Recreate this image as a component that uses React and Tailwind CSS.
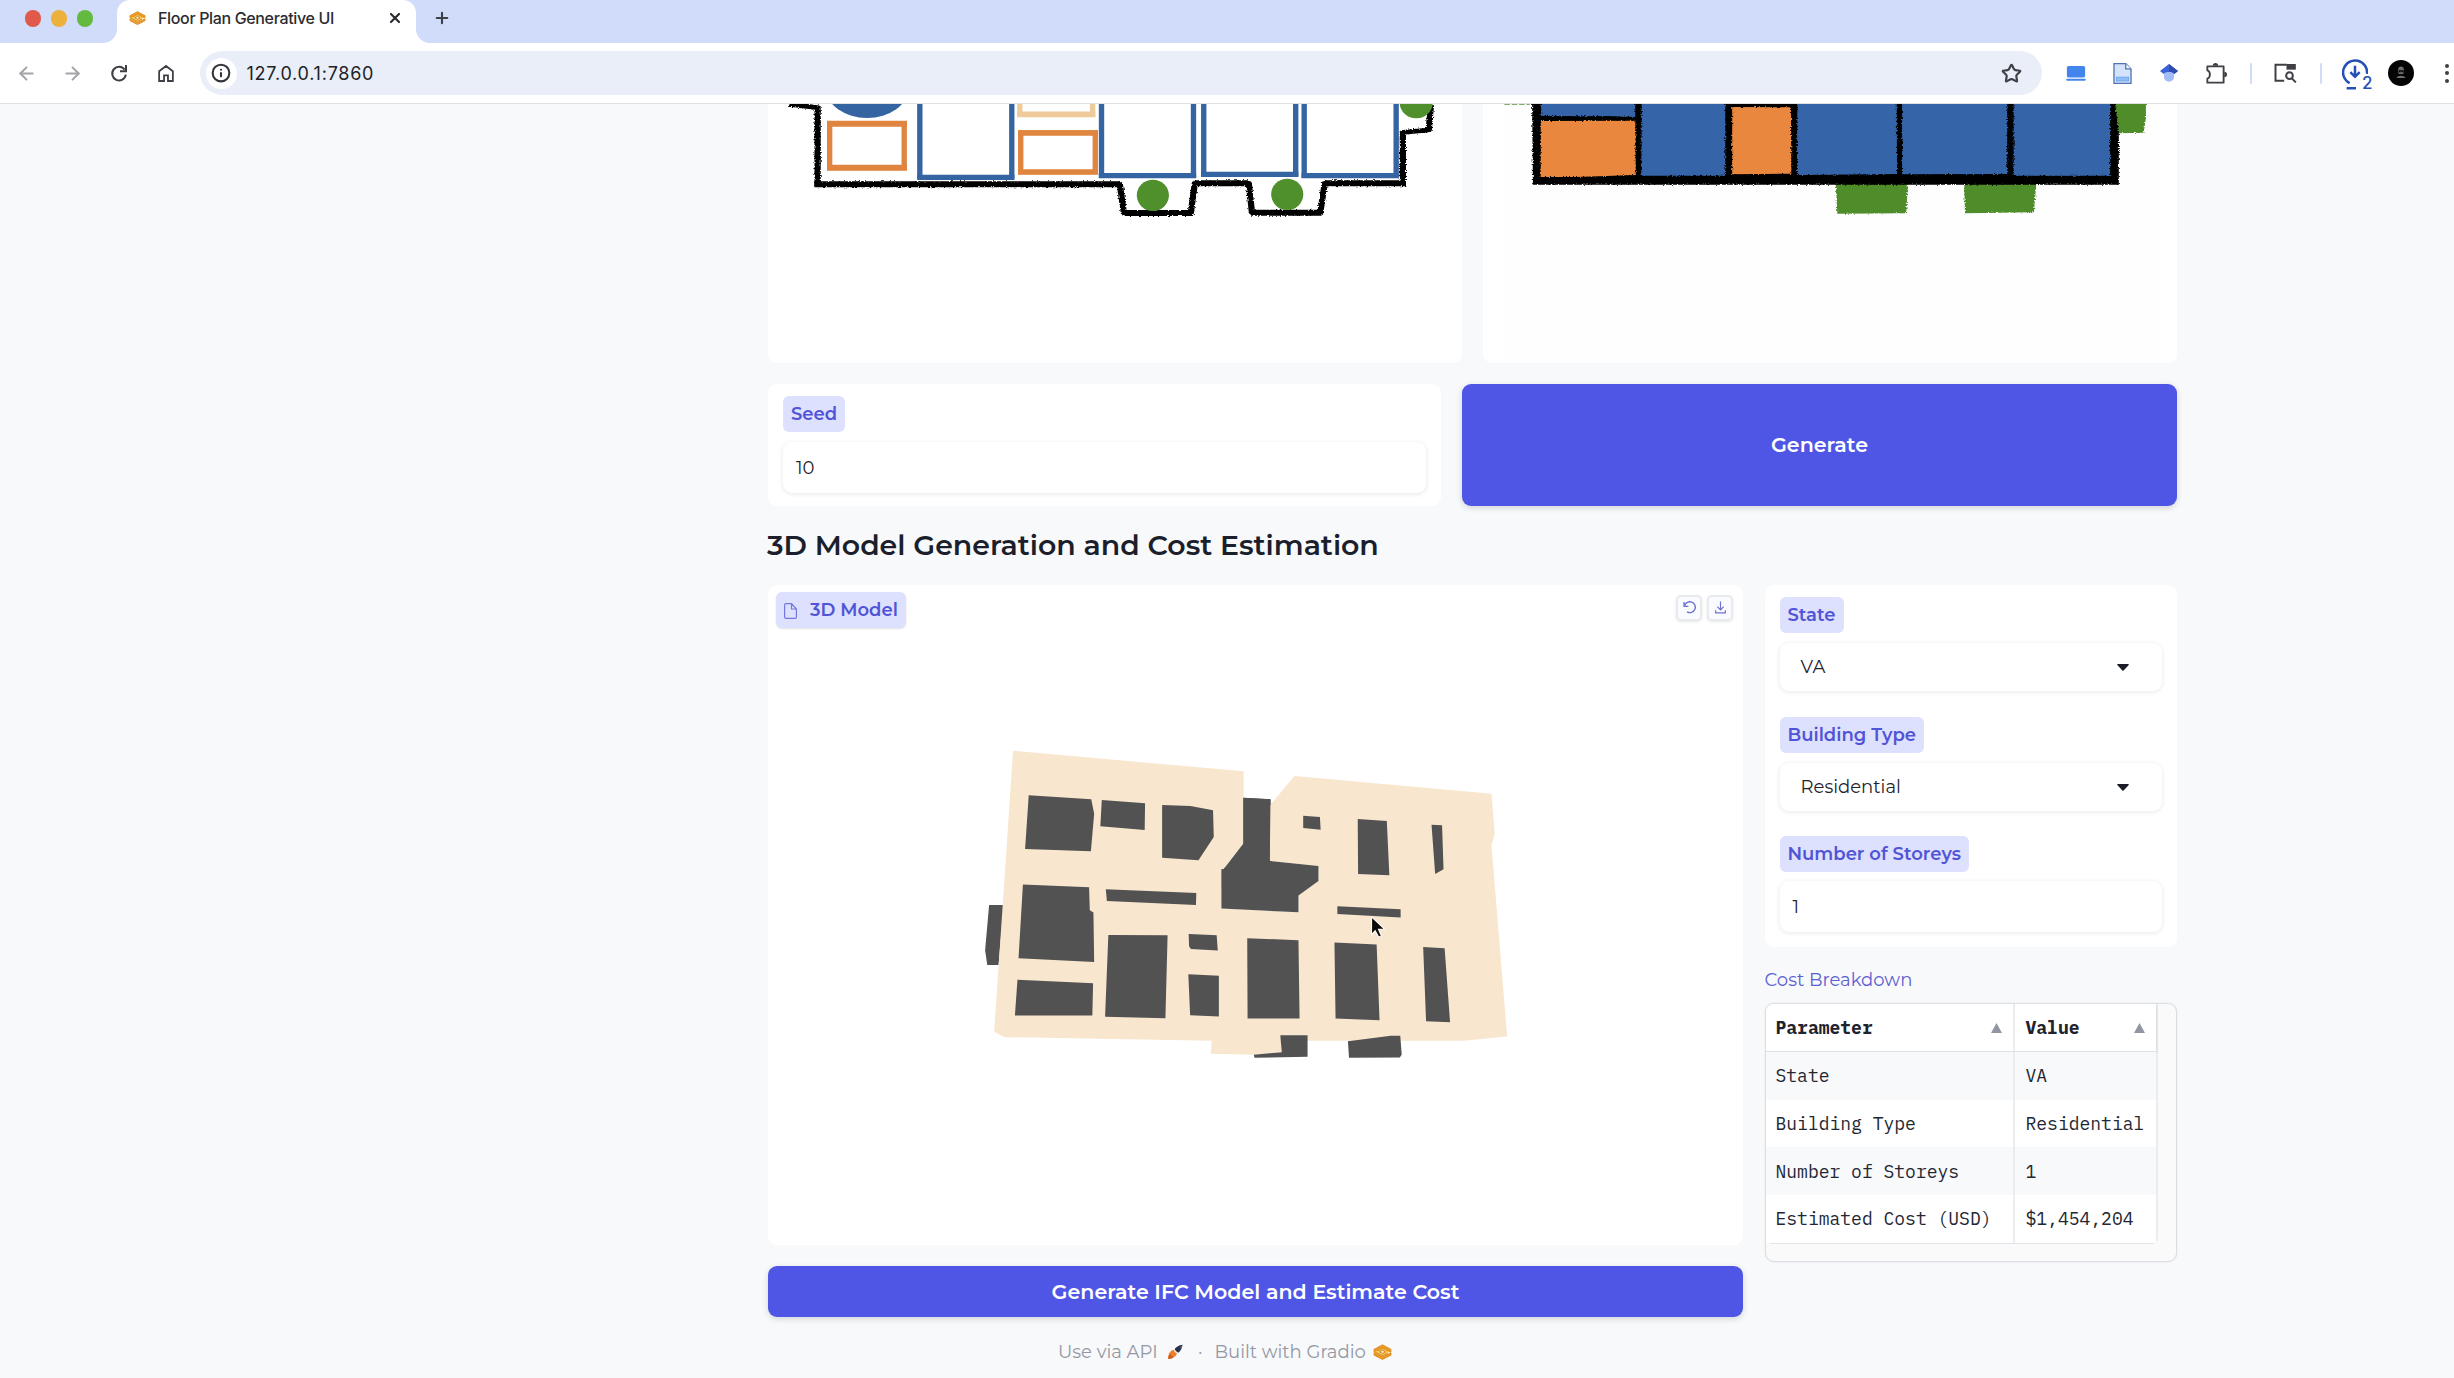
import { X, Plus, ArrowLeft, ArrowRight, Info, Star } from "lucide-react";

function GradioLogo({ className }) {
  return (
    <svg viewBox="0 0 52 44" className={className} fill="none">
      <path d="M26 3 49 15v5L26 32 3 20v-5Z" fill="#f9cf62" />
      <path d="M3 15 26 3l23 12v6L26 9 3 21Z" fill="#f0a52c" stroke="#e08a22" strokeWidth="3" strokeLinejoin="round" />
      <path d="M3 25v5l23 12 23-12v-5L26 36Z" fill="#f0a52c" stroke="#e08a22" strokeWidth="3" strokeLinejoin="round" />
      <path d="M3 21 26 33 40 25M49 22 26 11 12 19" stroke="#e39a26" strokeWidth="4" />
      <path d="M18 21.500 26 17l8 4.500-8 4.500Z" fill="#fdf0c4" stroke="#c9741d" strokeWidth="2.500" />
    </svg>
  );
}

function Rocket({ className }) {
  return (
    <svg viewBox="0 0 48 48" className={className}>
      <path d="M46 2C36 3 28 8 23 15c2 5 6 9 11 11 7-6 11-13 12-24Z" fill="#2b3245" />
      <path d="M37 13 46 2l-1 10Z" fill="#59617a" />
      <path d="M20 17C9 20 4 28 3 45c14-1 24-6 27-17-5-2-8-6-10-11Z" fill="#ee7f2e" />
      <path d="M4 45c0-7 2-12 6-15 2 4 6 8 10 9-4 4-9 6-16 6Z" fill="#c85f1c" />
    </svg>
  );
}

function TabStrip() {
  return (
    <div className="flex h-[43px] bg-[#d0dcfa] font-['Inter','Liberation_Sans',sans-serif]">
      <div className="flex w-[103px] shrink-0 items-start gap-[10px] pt-[10px] pl-[25px]">
        <span className="h-[17px] w-[16px] rounded-full bg-[#e0594a]" />
        <span className="h-[17px] w-[16px] rounded-full bg-[#ecb03c]" />
        <span className="h-[17px] w-[16px] rounded-full bg-[#63ba3f]" />
      </div>
      <div className="w-[14px] shrink-0 bg-white">
        <div className="h-full w-full rounded-br-[14px] bg-[#d0dcfa]" />
      </div>
      <div className="flex w-[299px] shrink-0 items-start rounded-t-[13px] bg-white pt-[6px] pl-[12px]">
        <GradioLogo className="mt-[4px] h-[16px] w-[17px]" />
        <span className="ml-[12px] w-[180px] text-[16px] leading-[24px] font-medium tracking-[-0.35px] whitespace-nowrap text-[#2b2c30]">
          Floor Plan Generative UI
        </span>
        <X className="mt-[4px] ml-[49px] h-[16px] w-[16px] text-[#2b2c30]" strokeWidth={3.2} />
      </div>
      <div className="w-[14px] shrink-0 bg-white">
        <div className="h-full w-full rounded-bl-[14px] bg-[#d0dcfa]" />
      </div>
      <Plus className="mt-[9px] ml-[3px] h-[18px] w-[18px] text-[#3c3f46]" strokeWidth={2.8} />
    </div>
  );
}

function Toolbar() {
  return (
    <div className="flex h-[61px] items-center border-b border-[#dfe0e4] bg-white font-['Inter','Liberation_Sans',sans-serif]">
      <ArrowLeft className="ml-[16px] h-[21px] w-[21px] text-[#a3a4a8]" strokeWidth={2.3} />
      <ArrowRight className="ml-[25px] h-[21px] w-[21px] text-[#a3a4a8]" strokeWidth={2.3} />
      <svg viewBox="0 0 48 48" className="ml-[28px] h-[16px] w-[16px] overflow-visible" fill="none" stroke="#3f4045" strokeWidth="6">
        <path d="M41 14A20.500 20.500 0 1 0 44.500 29" />
        <path d="M45 0v19H27" />
      </svg>
      <svg viewBox="0 0 48 52" className="ml-[31px] h-[17px] w-[16px] overflow-visible" fill="none" stroke="#3f4045" strokeWidth="5.500">
        <path d="M3 49V19L24 3l21 16v30H30V32H18v17Z" />
      </svg>
      <div className="ml-[26px] flex h-[44px] w-[1842px] shrink-0 items-center rounded-full bg-[#e9eef9] pl-[5.500px]">
        <span className="flex h-[31px] w-[31px] items-center justify-center rounded-full bg-white">
          <Info className="h-[20px] w-[20px] text-[#33353a]" strokeWidth={2.5} />
        </span>
        <span className="ml-[10px] text-[18px] tracking-[0.75px] text-[#202227]">127.0.0.1:7860</span>
        <Star className="mr-[20px] ml-auto h-[21px] w-[21px] text-[#3f4045]" strokeWidth={2.5} />
      </div>
      <svg viewBox="0 0 60 46" className="ml-[24px] h-[15px] w-[20px] shrink-0">
        <rect x="2" y="0" width="56" height="35" rx="5" fill="#4285ec" />
        <rect x="0" y="39" width="60" height="6" rx="3" fill="#4285ec" />
      </svg>
      <svg viewBox="0 0 56 64" className="ml-[27px] h-[21px] w-[19px] shrink-0">
        <path d="M2 2h36l16 16v44H2Z" fill="#d5e2fb" stroke="#4f74b4" strokeWidth="4" />
        <path d="M38 2v16h16" fill="#fff" stroke="#4f74b4" strokeWidth="4" />
        <rect x="9" y="43" width="38" height="12" fill="#8fbdf7" stroke="#5f9ae8" strokeWidth="2" />
      </svg>
      <svg viewBox="0 0 54 54" className="ml-[28px] h-[18px] w-[18px] shrink-0">
        <path d="M12 22h30v18c0 7-6 13-15 13s-15-6-15-13Z" fill="#a3bdf6" />
        <path d="M27 0 54 21 43 30c-4-8-28-8-32 0L0 21Z" fill="#3c62d8" />
        <path d="M27 0 54 21 43 30c-3-6-9-7-16-7Z" fill="#2f4cae" />
      </svg>
      <svg viewBox="0 0 62 62" className="ml-[28px] h-[21px] w-[21px] shrink-0" fill="none" stroke="#3f4045" strokeWidth="5.500">
        <path d="M4 10H52V58H4V46c10-3 10-21 0-24Z" strokeLinejoin="round" />
        <path d="M20 8a8 8 0 0 1 16 0ZM54 26a8 8 0 0 1 0 16Z" fill="#3f4045" stroke="none" />
      </svg>
      <span className="ml-[23px] h-[21px] w-[2px] shrink-0 rounded bg-[#cfdcf8]" />
      <svg viewBox="0 0 68 60" className="ml-[22px] h-[20px] w-[23px] shrink-0" fill="none" stroke="#3f4045" strokeWidth="6">
        <path d="M30 53H4V5h34" />
        <path d="M37 3h28v17H37Z" fill="#3f4045" stroke="none" />
        <circle cx="46" cy="38" r="10" />
        <path d="m53 46 12 12" />
      </svg>
      <span className="ml-[23px] h-[21px] w-[2px] shrink-0 rounded bg-[#cfdcf8]" />
      <div className="ml-[20px] flex h-[34px] w-[31px] shrink-0 items-end">
        <svg viewBox="0 0 78 92" className="h-[31px] w-[26px] shrink-0" fill="none" stroke="#2450b5" strokeWidth="7.500">
          <path d="M23 72A36 36 0 1 1 75 44" />
          <path d="M39 20v31M25 39l14 14 14-14M14 87h28" />
        </svg>
        <span className="-ml-[6px] text-[17px] leading-[14px] font-medium text-[#2450b5]">2</span>
      </div>
      <svg viewBox="0 0 78 78" className="ml-[15px] h-[26px] w-[26px] shrink-0">
        <circle cx="39" cy="39" r="39" fill="#050505" />
        <path d="M30 30c0-14 18-14 18 0l-2 12H32ZM25 54c5-9 23-9 28 0Z" fill="#6f6f6f" />
        <path d="M33 31h5v5h-5ZM41 31h5v5h-5ZM34 45h10" fill="#111" stroke="#111" strokeWidth="2" />
      </svg>
      <div className="ml-[31px] flex shrink-0 flex-col gap-[3.500px]">
        <span className="h-[4px] w-[4px] rounded-full bg-[#3f4045]" />
        <span className="h-[4px] w-[4px] rounded-full bg-[#3f4045]" />
        <span className="h-[4px] w-[4px] rounded-full bg-[#3f4045]" />
      </div>
    </div>
  );
}

function SketchPlan() {
  return (
    <svg viewBox="17.900 27 1554.600 777" preserveAspectRatio="none" className="block h-[259px] w-[694px]" fill="none">
      <defs>
        <filter id="rough" x="-5%" y="-5%" width="110%" height="110%">
          <feTurbulence type="fractalNoise" baseFrequency="0.25" numOctaves="2" seed="4" />
          <feDisplacementMap in="SourceGraphic" scale="9" xChannelSelector="R" yChannelSelector="G" />
        </filter>
      </defs>
      <ellipse cx="240" cy="-20" rx="92" ry="89" fill="#3564a3" />
      <path d="M156 84H323V220H156Z" stroke="#df8540" strokeWidth="12" />
      <path d="M150 86H329M150 218H329" stroke="#df8540" strokeWidth="18" />
      <path d="M582 0V60H745V0" stroke="#efcb9c" strokeWidth="12" />
      <path d="M576 58H751" stroke="#efcb9c" strokeWidth="17" />
      <path d="M584 112H751V232H584Z" stroke="#df8540" strokeWidth="12" />
      <path d="M578 114H757M578 231H757" stroke="#df8540" strokeWidth="17" />
      <g stroke="#3564a3" strokeWidth="12">
        <path d="M358 0V250M564 0V250M765 0V248M971 0V248M994 0V244M1200 0V244M1219 0V248M1425 0V248" />
        <path d="M352 247H570M759 242H977M988 238H1206M1213 242H1431" strokeWidth="16" />
      </g>
      <g filter="url(#rough)" stroke="#000" strokeWidth="14">
        <path d="M66 28 129 38V268H806L815 354H965L974 265H1095L1102 353H1255L1265 265H1440V112L1498 105 1503 30" strokeLinejoin="round" />
        <path d="M122 268H806M815 354H970M974 265H1095M1100 353H1258M1265 265H1447" strokeWidth="18" />
      </g>
      <ellipse cx="880" cy="301" rx="36" ry="47" fill="#4f8f2c" />
      <ellipse cx="1181" cy="298" rx="36" ry="47" fill="#4f8f2c" />
      <ellipse cx="1470" cy="23" rx="37" ry="47" fill="#4f8f2c" />
    </svg>
  );
}

function GeneratedPlan() {
  return (
    <svg viewBox="28.300 27 1511.400 777" preserveAspectRatio="none" className="block h-[259px] w-[694px]">
      <path d="M72 27H1500V804H72Z" fill="#fefefe" />
      <path d="M75 28H130" stroke="#5b8f3c" strokeWidth="3" strokeDasharray="12 4" />
      <g filter="url(#rough)">
        <path d="M1400 0H1472V70L1467 113 1412 115ZM796 255H954L950 355 800 356ZM1076 255H1234L1228 352 1078 355Z" fill="#4f8d29" />
        <path d="M135 -20H1400L1413 110V269H137Z" fill="#000" />
        <path d="M155 -20H360V66L300 63 240 64 155 62ZM374 -20H556V242H373ZM713 -20H929L930 237 712 240ZM941 -20H1170V237L941 238ZM1184 -20H1394V242H1184Z" fill="#3665a8" />
        <path d="M154 78 360 77 361 240 230 246H154ZM571 36 699 37 700 236 571 238Z" fill="#e8873c" />
      </g>
    </svg>
  );
}

function Model() {
  return (
    <svg viewBox="-528.200 -406.500 2682 1981.500" preserveAspectRatio="none" className="block h-full w-full">
      <path d="M80 554H120L106 734H75L69 690ZM779 232 854 237 860 500H720V440H779Z" fill="#525252" />
      <path d="M146 91 780 153V370L725 447H719V565L931 576V526L986 482V437L852 422V256L920 167 1462 220 1471 342 1462 375 1505 949 1385 962H693L122 951 94 935Z" fill="#f9e6ce" />
      <path d="M693 955H884V996L808 1004 690 1001Z" fill="#f9e6ce" />
      <path
        d="M1067 963 1185 947H1211L1215 1003 1210 1012 1070 1013ZM779 232 854 237 852 422 986 437V482L931 526V576L719 565V447L725 447 779 370ZM189 225 361 237 369 280 360 393 179 386ZM390 239 509 249 508 329 386 318ZM556 254 634 257 696 270 698 350 656 420 556 412ZM944 286 990 290 992 328 944 323ZM1094 296 1174 302 1181 465 1095 461ZM1297 313 1326 315 1330 447 1307 461ZM173 493 355 501 357 570 367 577 369 725 161 714ZM401 507 650 518 649 554 404 542ZM1038 558 1212 567V592L1038 581ZM408 644 571 645 565 894 399 890ZM629 641 706 645 709 691 635 686 630 678ZM628 762 712 767V889L633 885ZM790 654 931 660 934 895H791ZM1030 667 1146 673 1154 900 1033 895ZM1274 680 1333 684 1348 906 1282 903ZM158 779 366 789 364 886H151ZM881 945H956V1010L810 1013 808 1004 885 996Z"
        fill="#525252"
      />
      <path d="M1132 590V643L1142 631 1152 651 1159 647 1151 627H1168Z" fill="#0a0a0a" stroke="#fff" strokeWidth="3" />
    </svg>
  );
}

function Tag({ children, className = "" }) {
  return (
    <span className={`inline-flex h-[36px] w-fit items-center rounded-[6px] bg-[#dde1fd] px-[8px] pt-[1.500px] text-[18px] font-semibold whitespace-nowrap text-[#5154d6] ${className}`}>
      {children}
    </span>
  );
}

function Select({ value }) {
  return (
    <div className="flex h-[48px] items-center justify-between rounded-[9px] bg-white pr-[33px] pl-[21px] shadow-[0_1px_4px_1px_rgba(0,0,0,0.07)]">
      <span className="pt-px text-[18px] text-[#1f232e]">{value}</span>
      <svg viewBox="0 0 12 7" className="h-[7px] w-[12px]">
        <path d="M0.500 0h11q.6.600 0 1.200L6.600 6.500q-.6.500-1.200 0L.5 1.200Q0 .600.500 0Z" fill="#1a1d26" />
      </svg>
    </div>
  );
}

function NumberInput({ value }) {
  return (
    <div className="flex h-[51px] items-center rounded-[9px] bg-white px-[13px] pt-[2px] text-[18px] text-[#1f232e] shadow-[0_1px_4px_1px_rgba(0,0,0,0.07)]">
      {value}
    </div>
  );
}

function IconButton({ children }) {
  return (
    <span className="flex h-[26px] w-[26px] items-center justify-center rounded-[5px] border-2 border-[#e9eaef] bg-[#fafbfe] shadow-[0_1px_3px_rgba(0,0,0,0.1)]">
      {children}
    </span>
  );
}

const rows = [
  ["State", "VA"],
  ["Building Type", "Residential"],
  ["Number of Storeys", "1"],
  ["Estimated Cost (USD)", "$1,454,204"],
];

function SortMark() {
  return (
    <svg viewBox="0 0 11 10" className="h-[10px] w-[11px]">
      <path d="M5.500 0 11 10H0Z" fill="#9396a0" />
    </svg>
  );
}

function CostTable() {
  return (
    <div className="h-[259px] overflow-hidden rounded-[9px] border border-[#dddee4] bg-[#fafafa] font-['IBM_Plex_Mono','Liberation_Mono',monospace] text-[18px] text-[#232733] shadow-[0_0_2px_rgba(0,0,0,0.1)]">
      <div className="w-[392px] rounded-b-[6px] border-r-2 border-b border-r-[#ebecf2] border-b-[#e1e2ea] bg-white">
        <div className="flex h-[48.500px] border-b border-[#dfe0e8] font-bold text-[#1f2330] shadow-[0_1px_3px_rgba(0,0,0,0.12)]">
          <div className="flex w-[249px] items-center justify-between border-r-2 border-[#ebecf2] pt-px pr-[11px] pl-[10px]">
            Parameter
            <SortMark />
          </div>
          <div className="flex flex-1 items-center justify-between pt-px pr-[11px] pl-[11px]">
            Value
            <SortMark />
          </div>
        </div>
        {rows.map(([name, value], i) => (
          <div key={name} className={`flex h-[47.700px] ${i % 2 ? "bg-white" : "bg-[#f8f9fb]"}`}>
            <div className="flex w-[249px] items-center border-r-2 border-[#ebecf2] pl-[10px] whitespace-nowrap">{name}</div>
            <div className="flex flex-1 items-center pl-[11px]">{value}</div>
          </div>
        ))}
      </div>
    </div>
  );
}

export default function App() {
  return (
    <div className="h-[1378px] w-[2454px] overflow-hidden bg-[#f8f9fb] font-['Montserrat','Inter','Liberation_Sans',sans-serif]">
      <TabStrip />
      <Toolbar />
      <main className="ml-[768px] w-[1409px]">
        <div className="flex gap-[21px]">
          <div className="overflow-hidden rounded-b-[9px] bg-white">
            <SketchPlan />
          </div>
          <div className="overflow-hidden rounded-b-[9px] bg-white">
            <GeneratedPlan />
          </div>
        </div>

        <div className="mt-[21px] flex h-[122px] gap-[21px]">
          <div className="flex w-[673px] flex-col rounded-[9px] bg-white px-[15px] pt-[12px]">
            <Tag className="mb-[10px]">Seed</Tag>
            <NumberInput value="10" />
          </div>
          <button className="flex-1 rounded-[9px] bg-[#4f56e6] pt-px text-[20.600px] font-semibold text-white shadow-[0_2px_6px_rgba(0,0,0,0.15)]">
            Generate
          </button>
        </div>

        <h2 className="mt-[21px] -ml-[1px] h-[36px] text-[28.360px] leading-[36px] font-semibold text-[#1b1f2b]">
          3D Model Generation and Cost Estimation
        </h2>

        <div className="mt-[21.500px] flex gap-[21.500px]">
          <div className="w-[975px]">
            <div className="relative h-[660px] rounded-[9px] bg-white">
              <Model />
              <Tag className="absolute top-[7.500px] left-[8px] shadow-[0_1px_2px_rgba(0,0,0,0.12)]">
                <svg viewBox="0 0 13 16" className="mr-[13px] h-[16px] w-[13px]" fill="none" stroke="#7478e0" strokeWidth="1.200">
                  <path d="M2 .6h5.500L12.400 6v8q0 1.400-1.400 1.400H2Q.6 15.400.6 14V2Q.6.600 2 .600ZM7.500.600V6h4.900" />
                </svg>
                3D Model
              </Tag>
              <div className="absolute top-[10px] right-[10px] flex gap-[5px]">
                <IconButton>
                  <svg viewBox="0 0 24 24" className="h-[13px] w-[13px]" fill="none" stroke="#6f72cf" strokeWidth="2.600">
                    <path d="M3 9A10 10 0 1 1 7.500 20" />
                    <path d="M2 2v8h8" />
                  </svg>
                </IconButton>
                <IconButton>
                  <svg viewBox="0 0 24 24" className="h-[13px] w-[13px]" fill="none" stroke="#6f72cf" strokeWidth="2.200">
                    <path d="M12 1v15M6 10.500l6 6 6-6M3 17v5h18v-5" />
                  </svg>
                </IconButton>
              </div>
            </div>
            <button className="mt-[21.500px] block h-[51px] w-full rounded-[9px] bg-[#4f56e6] pt-px text-[20.600px] font-semibold text-white shadow-[0_2px_6px_rgba(0,0,0,0.15)]">
              Generate IFC Model and Estimate Cost
            </button>
          </div>

          <div className="w-[412.500px]">
            <div className="flex h-[362px] flex-col rounded-[9px] bg-white px-[15px] pt-[12px]">
              <Tag className="mb-[10.500px]">State</Tag>
              <Select value="VA" />
              <Tag className="mt-[25.500px] mb-[10.500px]">Building Type</Tag>
              <Select value="Residential" />
              <Tag className="mt-[25px] mb-[9px]">Number of Storeys</Tag>
              <NumberInput value="1" />
            </div>
            <p className="mt-[20px] mb-[12px] h-[24px] text-[18px] leading-[27px] text-[#5c5fd2]">Cost Breakdown</p>
            <CostTable />
          </div>
        </div>
      </main>
      <footer className="mt-[21px] ml-[1058px] flex h-[28px] items-center text-[18px] whitespace-nowrap text-[#9498a4]">
        <span className="w-[109px]">Use via API</span>
        <Rocket className="h-[16px] w-[16px]" />
        <span className="mr-[12px] ml-[15px]">·</span>
        <span className="w-[158px]">Built with Gradio</span>
        <GradioLogo className="h-[16px] w-[19px]" />
      </footer>
    </div>
  );
}
